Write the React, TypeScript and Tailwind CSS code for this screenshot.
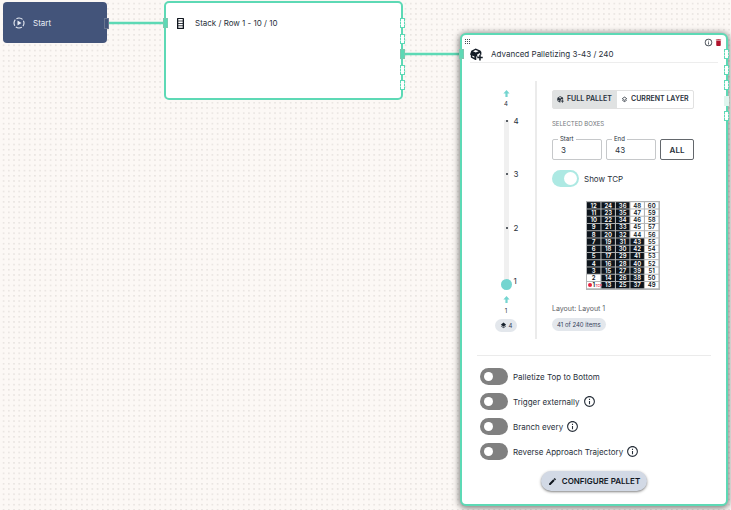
import React, { useState } from 'react';
import { MdDelete, MdEdit, MdInfoOutline, MdLayers, MdOutlineLayers } from 'react-icons/md';
import clsx from 'clsx';

type PortKind = 'open' | 'filled' | 'faint';

const COLUMNS = 5;
const ROWS = 12;

function StartIcon() {
  return (
    <svg viewBox="0 0 24 24" className="w-3 h-3 shrink-0" fill="none" stroke="currentColor" strokeWidth="2.2">
      <circle cx="12" cy="12" r="10" strokeDasharray="13 2.7" strokeDashoffset="6.5" />
      <path d="M9 7v10l8-5z" fill="currentColor" stroke="none" />
    </svg>
  );
}

function StackIcon() {
  return (
    <svg viewBox="0 0 7 11" className="w-[7px] h-[11px] shrink-0">
      <rect width="7" height="11" rx="0.6" fill="#10161e" />
      {[1, 3.4, 5.8, 8.2].map((y) => (
        <rect key={y} x="1.3" y={y} width="4.4" height="1.6" fill="#ffffff" />
      ))}
    </svg>
  );
}

function ArrowIcon() {
  return (
    <svg viewBox="0 0 9 9" className="w-[9px] h-[9px]" fill="#74d5d0">
      <path d="M4.5 1 7.6 4.6H5.6V8H3.4V4.6H1.4z" />
    </svg>
  );
}

function BoxPlusIcon({ className }: { className?: string }) {
  return (
    <svg viewBox="0 0 24 24" className={className} fill="currentColor">
      <path d="M10.5 1 19 4.6 21 7.2v5.3h-2.6V9.3l-5.2 2.6v2.6l-1.6 1.6v6.2L9.8 22 1.6 17.5 1.5 13 0 12.2 2.4 5zM10.4 3.5 5.6 5.8l5.1 2.5 5.2-2.5zM4.3 13.8v2.4l3.8 2v-2.6z" fillRule="evenodd" />
      <path d="M17 12.5h2.8V16h3.7v2.8h-3.7v4.4H17v-4.4h-3.6V16H17z" />
      <path d="M12.6 14.5h3.2v1.2h-3.2z" />
    </svg>
  );
}

function DragIcon() {
  return (
    <svg viewBox="0 0 5 5" className="w-[5px] h-[5px] mt-px" fill="#454b52" shapeRendering="crispEdges">
      {[0, 2, 4].map((y) => [0, 2, 4].map((x) => <rect key={`${x}-${y}`} x={x} y={y} width="1" height="1" />))}
    </svg>
  );
}

function Ports({ kinds, className }: { kinds: PortKind[]; className: string }) {
  return (
    <div className={clsx('absolute flex flex-col justify-between h-[72px]', className)}>
      {kinds.map((kind, i) => (
        <span
          key={i}
          className={clsx(
            'w-[5px] h-[10px]',
            kind === 'open' && 'bg-white border border-dashed border-[#5dd9b5]',
            kind === 'filled' && 'bg-[#5dd9b5] border border-[#7cc9af]',
            kind === 'faint' && 'bg-[#dff5ee]'
          )}
        />
      ))}
    </div>
  );
}

function Field({ label, value, onChange }: { label: string; value: string; onChange: (v: string) => void }) {
  const id = `field-${label}`;
  return (
    <div className="relative w-[50px]">
      <label htmlFor={id} className="absolute -top-1 left-[6px] px-[2px] bg-white text-[6px] leading-[8px]">
        {label}
      </label>
      <input
        id={id}
        value={value}
        onChange={(e) => onChange(e.target.value)}
        className="block w-full h-[21px] px-2 border border-[#c6c8ca] rounded-xs text-[8px] outline-none"
      />
    </div>
  );
}

function OptionRow({ label, info }: { label: string; info?: boolean }) {
  return (
    <div className="flex items-center h-[17px]">
      <label className="flex items-center gap-[5px]">
        <input
          type="checkbox"
          role="switch"
          className="appearance-none relative w-7 h-[17px] rounded-full bg-[#808080] checked:bg-[#ade9e3] before:absolute before:top-1 before:left-1 before:w-[9px] before:h-[9px] before:rounded-full before:bg-white checked:before:left-[15px]"
        />
        {label}
      </label>
      {info && (
        <button aria-label={`About ${label}`} className="ml-[3px]">
          <MdInfoOutline className="w-[13px] h-[13px]" />
        </button>
      )}
    </div>
  );
}

function LayerSlider() {
  const [layer, setLayer] = useState(1);
  return (
    <div className="flex flex-col items-center w-9 pt-2 text-[6px] leading-[8px]">
      <ArrowIcon />
      <span className="mt-[2px]">4</span>
      <div className="relative mt-3 h-[170px] flex justify-center">
        <input
          type="range"
          aria-label="Layer"
          min={1}
          max={4}
          value={layer}
          onChange={(e) => setLayer(Number(e.target.value))}
          className="appearance-none w-[11px] h-[170px] bg-transparent [writing-mode:vertical-lr] [direction:rtl] [&::-webkit-slider-runnable-track]:w-[5px] [&::-webkit-slider-runnable-track]:bg-[#f0f0f0] [&::-webkit-slider-thumb]:appearance-none [&::-webkit-slider-thumb]:w-[11px] [&::-webkit-slider-thumb]:h-[11px] [&::-webkit-slider-thumb]:-ml-[3px] [&::-webkit-slider-thumb]:rounded-full [&::-webkit-slider-thumb]:bg-[#74d5d0]"
        />
        <div className="absolute -top-1 left-[5px] h-[170px] flex flex-col justify-between pointer-events-none text-[8px] leading-[10px]">
          {[4, 3, 2, 1].map((n) => (
            <span key={n} className="flex items-center gap-[6px]">
              <i className={clsx('w-[2px] h-[2px] rounded-full', n !== layer && 'bg-[#2a3038]')} />
              {n}
            </span>
          ))}
        </div>
      </div>
      <div className="mt-[5px]">
        <ArrowIcon />
      </div>
      <span className="mt-[3px]">1</span>
      <span className="mt-1 flex items-center gap-[2px] h-[13px] px-[5px] rounded-full bg-[#e3e7ec] text-[#34415a]">
        <MdLayers className="w-[7px] h-[7px] text-[#17202c]" />4
      </span>
    </div>
  );
}

function PalletPreview({ start, end }: { start: number; end: number }) {
  const cells = Array.from({ length: COLUMNS * ROWS }, (_, i) => i + 1);
  return (
    <svg viewBox="0 0 74 89" className="block w-[74px] h-[89px]" role="img" aria-label="Pallet layout">
      <rect width="74" height="89" fill="#b3b5b6" />
      {cells.map((n) => {
        const x = 1 + Math.floor((n - 1) / ROWS) * 14.5;
        const y = 1.2 + (ROWS - 1 - ((n - 1) % ROWS)) * 7.25;
        const selected = n >= start && n <= end;
        return (
          <g key={n}>
            <rect x={x} y={y} width="13.4" height="6.3" fill={selected ? '#0d141b' : '#ffffff'} />
            <text x={x + 6.7} y={y + 5.3} textAnchor="middle" fontSize="6" fontWeight="600" fill={selected ? '#ffffff' : '#0d141b'}>
              {n}
            </text>
          </g>
        );
      })}
      <circle cx="4" cy="84" r="2" fill="#e8203f" />
      <text x="9.5" y="85.5" fontSize="3" fontWeight="700" fill="#ee4565">TCP</text>
    </svg>
  );
}

function PalletizingNode() {
  const [mode, setMode] = useState<'full' | 'layer'>('full');
  const [start, setStart] = useState('3');
  const [end, setEnd] = useState('43');

  return (
    <section className="absolute left-[460px] top-[33px] w-[268px] px-[3px] pb-[13px] bg-white border-2 border-[#5dd9b5] rounded-md shadow-[0_1px_6px_1px_rgba(0,0,0,0.5)]">
      <Ports kinds={['filled']} className="-left-[3px] top-[14px]" />
      <Ports kinds={['open', 'open', 'open', 'faint', 'open']} className="-right-[3px] top-[14px]" />

      <div className="flex items-start justify-between pt-[3px] h-3">
        <DragIcon />
        <div className="flex gap-px">
          <button aria-label="Info"><MdInfoOutline className="block w-[9px] h-[9px]" /></button>
          <button aria-label="Delete"><MdDelete className="block w-[9px] h-[9px] text-[#b0132c]" /></button>
        </div>
      </div>
      <header className="flex items-center gap-2 mx-[5px] h-4 pb-[1px] border-b border-[#ededed]">
        <BoxPlusIcon className="w-[13px] h-[13px] shrink-0 text-[#141c26]" />
        <h2 className="text-[8px]">Advanced Palletizing 3-43 / 240</h2>
      </header>

      <div className="flex mt-[18px] pl-[23px]">
        <LayerSlider />
        <div className="ml-[11px] w-[2px] bg-[#ebebeb]" />
        <div className="flex flex-col items-start ml-[15px] pt-[9px] pb-2">
          <div className="flex h-[19px] w-[142px] border border-[#e1e1e1] rounded-xs text-[7px] font-semibold">
            <button
              onClick={() => setMode('full')}
              className={clsx('flex items-center gap-[3px] pl-1 w-16', mode === 'full' && 'bg-[#e0e2e2]')}
            >
              <BoxPlusIcon className="w-[7px] h-[7px]" />
              FULL PALLET
            </button>
            <button
              onClick={() => setMode('layer')}
              className={clsx('flex flex-1 items-center gap-[3px] pl-1 whitespace-nowrap', mode === 'layer' && 'bg-[#e0e2e2]')}
            >
              <MdOutlineLayers className="w-[7px] h-[7px]" />
              CURRENT LAYER
            </button>
          </div>
          <p className="mt-[11px] text-[6px] leading-[8px] text-[#74777b]">SELECTED BOXES</p>
          <div className="flex gap-[4px] mt-[11px]">
            <Field label="Start" value={start} onChange={setStart} />
            <Field label="End" value={end} onChange={setEnd} />
            <button
              onClick={() => { setStart('1'); setEnd('60'); }}
              className="w-[34px] h-[21px] border border-[#63676c] rounded-xs text-[8px] font-semibold"
            >
              ALL
            </button>
          </div>
          <label className="flex items-center gap-[5px] mt-[10px] h-[17px] text-[8px]">
            <input
              type="checkbox"
              role="switch"
              defaultChecked
              className="appearance-none relative w-[27px] h-[17px] rounded-full bg-[#808080] checked:bg-[#ade9e3] before:absolute before:top-[2px] before:left-[2px] before:w-[13px] before:h-[13px] before:rounded-full before:bg-white checked:before:left-3"
            />
            Show TCP
          </label>
          <div className="mt-[14px] ml-[34px]">
            <PalletPreview start={Number(start)} end={Number(end)} />
          </div>
          <p className="mt-[14px] text-[7px] leading-[10px] text-[#5d6166]">Layout: Layout 1</p>
          <span className="mt-1 px-[5px] rounded-full bg-[#e3e7ec] text-[6px] leading-[13px] text-[#34415a]">41 of 240 items</span>
        </div>
      </div>

      <div className="mt-4 mx-3 h-px bg-[#ebebeb]" />
      <div className="flex flex-col gap-2 mt-3 pl-[15px] text-[8px]">
        <OptionRow label="Palletize Top to Bottom" />
        <OptionRow label="Trigger externally" info />
        <OptionRow label="Branch every" info />
        <OptionRow label="Reverse Approach Trajectory" info />
      </div>
      <button className="flex items-center gap-[5px] mt-[11px] mx-auto h-5 px-[7px] rounded-full bg-[#d2d9e5] text-[8px] font-semibold text-[#10161e] shadow-sm shadow-black/40">
        <MdEdit className="w-[9px] h-[9px]" />
        CONFIGURE PALLET
      </button>
    </section>
  );
}

export default function App() {
  return (
    <main className="relative min-h-screen overflow-hidden bg-[#fcf8f5] font-[Inter,sans-serif] leading-normal text-[#29313b]">
      {/* dotted canvas and the links between nodes */}
      <svg className="absolute inset-0 w-full h-full">
        <defs>
          <pattern id="dots" width="5.22" height="5.22" patternUnits="userSpaceOnUse" x="1" y="1">
            <circle cx="2.6" cy="2.6" r="0.55" fill="#c4bfbb" />
          </pattern>
        </defs>
        <rect width="100%" height="100%" fill="url(#dots)" />
        <path d="M107 23H165M403 54H461" stroke="#5dd9b5" strokeWidth="2.6" />
      </svg>

      <section className="absolute left-[3px] top-[2px] w-[104px] h-[41px] flex items-center gap-2 pl-[10px] bg-[#43547a] rounded-[4px] text-[#e9edf5] text-[8px]">
        <StartIcon />
        Start
        <span className="absolute -right-[2px] top-4 w-[5px] h-[11px] bg-[#43547a] border border-[#69758f]" />
      </section>

      <section className="absolute left-[164px] top-[1px] w-[239px] h-[99px] bg-white border-2 border-[#5dd9b5] rounded-[5px]">
        <Ports kinds={['filled']} className="-left-[3px] top-[15px]" />
        <Ports kinds={['open', 'open', 'filled', 'open', 'open']} className="-right-[4px] top-[15px]" />
        <header className="flex items-center gap-[11px] pl-[11px] pt-[14px] text-[8px]">
          <StackIcon />
          Stack / Row 1 - 10 / 10
        </header>
      </section>

      <PalletizingNode />
    </main>
  );
}
